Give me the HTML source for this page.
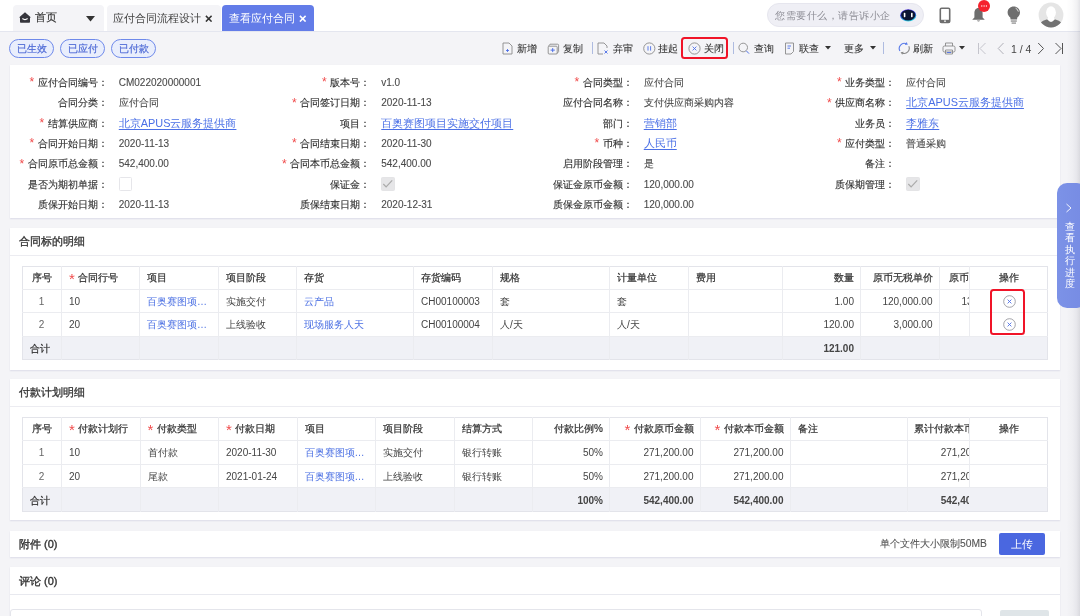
<!DOCTYPE html><html><head><meta charset="utf-8"><style>
*{box-sizing:border-box;margin:0;padding:0}
html,body{width:1080px;height:616px;overflow:hidden}
body{position:relative;background:#f4f4f7;font-family:"Liberation Sans",sans-serif;font-size:10px;color:#333}
.abs{position:absolute}
.t{position:absolute;white-space:nowrap;line-height:20px;height:20px}
.card{position:absolute;left:10px;width:1050px;background:#fff;box-shadow:0 1px 1.5px rgba(60,60,140,0.13), -0.5px 0 1px rgba(60,60,140,0.06)}
.req{color:#f04b4b;font-size:12px;-webkit-text-stroke:0;vertical-align:top;line-height:20px;position:relative;top:-0.5px;left:0px}
.lbl{color:#333;text-align:right;-webkit-text-stroke:0.15px #333}
.val{color:#4a4a4a;-webkit-text-stroke:0.1px #4a4a4a}
.lnk{color:#4a6fe6;text-decoration:underline;text-underline-offset:2px;font-size:10.9px;margin-top:-1px}
.blu{color:#4a6fe3}
.cell{position:absolute;white-space:nowrap;overflow:hidden;line-height:20px;height:20px;font-size:10px;color:#444}
.hd{color:#333;-webkit-text-stroke:0.22px #333}
.bd{font-weight:bold}
.req2{color:#f04b4b;font-size:15px;-webkit-text-stroke:0;vertical-align:top;line-height:20px;position:relative;top:1.5px;letter-spacing:-0.5px}
.sn{color:#666}
#wrap{position:absolute;left:0;top:0;width:1080px;height:616px;will-change:transform}
.r{text-align:right}
.c{text-align:center}
</style></head><body><div id="wrap">
<div class="abs" style="left:0;top:0;width:1080px;height:31px;background:#fff"></div>
<div class="abs" style="left:0;top:31px;width:1080px;height:1px;background:#e4e6ef"></div>
<div class="abs" style="left:13px;top:5px;width:91px;height:26px;background:#f4f4f7;border-radius:4px 4px 0 0"></div>
<div class="abs" style="left:107px;top:5px;width:114px;height:26px;background:#f4f4f7;border-radius:4px 4px 0 0"></div>
<div class="abs" style="left:222px;top:5px;width:92px;height:26px;background:#637ce8;border-radius:4px 4px 0 0"></div>
<svg class="abs" style="left:19px;top:12px" width="12" height="11" viewBox="0 0 12 11"><path d="M6 0.2 L12 5.6 L11 5.6 L11 10 Q11 10.8 10.2 10.8 L1.8 10.8 Q1 10.8 1 10 L1 5.6 L0 5.6Z" fill="#35353c"/><path d="M3.4 6.6 Q6 8.6 8.6 6.6" stroke="#fff" stroke-width="1.3" fill="none"/></svg>
<div class="t" style="left:35px;top:6.6px;font-size:11px;color:#333;-webkit-text-stroke:0.15px #333">首页</div>
<svg class="abs" style="left:86px;top:16px" width="9" height="6" viewBox="0 0 9 6"><path d="M0 0 L9 0 L4.5 5.5Z" fill="#333"/></svg>
<div class="t" style="left:113px;top:8px;font-size:11px;color:#444">应付合同流程设计</div>
<svg class="abs" style="left:204.5px;top:14.5px" width="7.5" height="7.5" viewBox="0 0 7.5 7.5"><path d="M0.9 0.9 L6.6 6.6 M6.6 0.9 L0.9 6.6" stroke="#333" stroke-width="1.5"/></svg>
<div class="t" style="left:229px;top:8px;font-size:11px;color:#fff">查看应付合同</div>
<svg class="abs" style="left:299px;top:14.5px" width="7.5" height="7.5" viewBox="0 0 7.5 7.5"><path d="M0.9 0.9 L6.6 6.6 M6.6 0.9 L0.9 6.6" stroke="#fff" stroke-width="1.5"/></svg>
<div class="abs" style="left:767px;top:3px;width:157px;height:24px;border-radius:12px;background:#efeff5;border:1px solid #e6e6ee"></div>
<div class="t" style="left:775px;top:6px;font-size:10.3px;letter-spacing:0.5px;color:#8c8c94">您需要什么，请告诉小企</div>
<svg class="abs" style="left:899.5px;top:8.5px" width="17" height="14" viewBox="0 0 17 14"><defs><linearGradient id="rb" x1="0" y1="0" x2="0.3" y2="1"><stop offset="0" stop-color="#6b3fe6"/><stop offset="0.5" stop-color="#1f36c8"/><stop offset="1" stop-color="#35d6ec"/></linearGradient></defs><ellipse cx="8.2" cy="6.4" rx="8" ry="6.2" fill="url(#rb)"/><ellipse cx="8.2" cy="6.1" rx="7.1" ry="5.4" fill="#0b1533"/><rect x="3.8" y="3.8" width="1.6" height="4.4" rx="0.6" fill="#fff"/><rect x="11" y="3.8" width="1.6" height="4.4" rx="0.6" fill="#fff"/></svg>
<svg class="abs" style="left:938.8px;top:6.5px" width="12" height="17" viewBox="0 0 12 17"><rect x="1.3" y="1.3" width="9.4" height="14.2" rx="1.3" fill="none" stroke="#6e6e6e" stroke-width="1.6"/><rect x="1.3" y="12.8" width="9.4" height="2.7" fill="#6e6e6e"/><rect x="5.3" y="13.4" width="1.4" height="1.6" fill="#fff"/></svg>
<svg class="abs" style="left:971px;top:6px" width="15" height="17" viewBox="0 0 15 17"><path d="M7.5 2 C4.6 2 3.4 4.6 3.4 7.2 L3.4 11.4 L1.2 13.8 L13.8 13.8 L11.6 11.4 L11.6 7.2 C11.6 4.6 10.4 2 7.5 2Z" fill="#6e6e6e"/><path d="M5.8 14.6 Q7.5 16.4 9.2 14.6Z" fill="#6e6e6e"/></svg>
<div class="abs" style="left:978px;top:-0.5px;width:12.2px;height:12.2px;border-radius:6.1px;background:#f5222d"></div>
<svg class="abs" style="left:978px;top:-0.5px" width="12" height="12"><circle cx="3.8" cy="6" r="0.65" fill="#fff"/><circle cx="6.1" cy="6" r="0.65" fill="#fff"/><circle cx="8.4" cy="6" r="0.65" fill="#fff"/></svg>
<svg class="abs" style="left:1006.8px;top:5.5px" width="14" height="19" viewBox="0 0 14 19"><path d="M6.8 0.6 C3.3 0.6 0.6 3.2 0.6 6.4 C0.6 8.8 2.1 10.2 3.3 11.6 L3.6 13.6 L10 13.6 L10.3 11.6 C11.5 10.2 13 8.8 13 6.4 C13 3.2 10.3 0.6 6.8 0.6Z" fill="#6e6e6e"/><path d="M8.6 2.2 Q10.9 3.2 11.3 5.6" stroke="#fff" stroke-width="0.8" fill="none"/><rect x="3.8" y="14.4" width="6" height="1.3" fill="#8a8a8a"/><rect x="4.6" y="16.4" width="4.4" height="1.4" fill="#9a9a9a"/></svg>
<svg class="abs" style="left:1037.5px;top:2px" width="26" height="26" viewBox="0 0 26 26"><defs><clipPath id="av"><circle cx="13" cy="13" r="12.4"/></clipPath></defs><circle cx="13" cy="13" r="12.4" fill="#e5e5e5"/><g clip-path="url(#av)"><path d="M0.5 26 Q1 19.6 8.5 17.6 L17.5 17.6 Q25 19.6 25.5 26Z" fill="#727272"/><path d="M9.4 17.6 Q13 22.2 16.6 17.6 L15.6 14.5 L10.4 14.5Z" fill="#fff"/><ellipse cx="13" cy="10.6" rx="4.9" ry="6.3" fill="#fff"/></g></svg>
<div class="abs" style="left:9px;top:39px;width:45px;height:19px;border:1px solid #6e89ea;border-radius:10px;background:#e9eefc"></div>
<div class="t c" style="left:9px;top:38.5px;width:45px;font-size:10.2px;color:#4f6bd6;-webkit-text-stroke:0.2px #4f6bd6">已生效</div>
<div class="abs" style="left:60px;top:39px;width:45px;height:19px;border:1px solid #6e89ea;border-radius:10px;background:#e9eefc"></div>
<div class="t c" style="left:60px;top:38.5px;width:45px;font-size:10.2px;color:#4f6bd6;-webkit-text-stroke:0.2px #4f6bd6">已应付</div>
<div class="abs" style="left:111px;top:39px;width:45px;height:19px;border:1px solid #6e89ea;border-radius:10px;background:#e9eefc"></div>
<div class="t c" style="left:111px;top:38.5px;width:45px;font-size:10.2px;color:#4f6bd6;-webkit-text-stroke:0.2px #4f6bd6">已付款</div>
<svg class="abs" style="left:502px;top:42px" width="11" height="13" viewBox="0 0 11 13"><path d="M1 1 L7 1 L10 4 L10 12 L1 12 Z" stroke="#8a8a8a" stroke-width="0.9" fill="none"/><path d="M4 8.5 L7 8.5 M5.5 7 L5.5 10" stroke="#4d6fe6" stroke-width="0.9"/></svg>
<div class="t" style="left:516.5px;top:38.8px;font-size:10px;color:#333;-webkit-text-stroke:0.08px #333">新增</div>
<svg class="abs" style="left:546.5px;top:42.5px" width="13" height="12" viewBox="0 0 13 12"><path d="M1.5 3.2 L3 1.2 L10.6 1.2 Q11.6 1.2 11.6 2.2 L11.6 8.6 L10 10.6" stroke="#8a8a8a" stroke-width="0.9" fill="none"/><rect x="1.2" y="3.2" width="9" height="7.8" rx="1" stroke="#8a8a8a" stroke-width="0.9" fill="none"/><path d="M3.6 7.1 L7.8 7.1 M5.7 5.1 L5.7 9.1" stroke="#4d6fe6" stroke-width="1"/></svg>
<div class="t" style="left:562.5px;top:38.8px;font-size:10px;color:#333;-webkit-text-stroke:0.08px #333">复制</div>
<div class="abs" style="left:592px;top:42px;width:1px;height:12px;background:#aebbe0"></div>
<svg class="abs" style="left:597px;top:42px" width="12" height="13" viewBox="0 0 12 13"><path d="M6 12 L1 12 L1 1 L7 1 L10 4 L10 6" stroke="#8a8a8a" stroke-width="0.9" fill="none"/><path d="M7.5 8.5 L10.5 11.5 M10.5 8.5 L7.5 11.5" stroke="#4d6fe6" stroke-width="0.9"/></svg>
<div class="t" style="left:612.5px;top:38.8px;font-size:10px;color:#333;-webkit-text-stroke:0.08px #333">弃审</div>
<svg class="abs" style="left:642.8px;top:42px" width="13" height="13" viewBox="0 0 13 13"><circle cx="6.3" cy="6.5" r="5.6" stroke="#8a8a8a" stroke-width="0.9" fill="none"/><path d="M5 4.2 L5 8.6 M7.6 4.2 L7.6 8.6" stroke="#4d6fe6" stroke-width="0.9"/></svg>
<div class="t" style="left:658px;top:38.8px;font-size:10px;color:#333;-webkit-text-stroke:0.08px #333">挂起</div>
<div class="abs" style="left:681px;top:37px;width:46.5px;height:21.5px;border:2px solid #f01428;border-radius:3.5px"></div>
<svg class="abs" style="left:687.5px;top:42px" width="13" height="13" viewBox="0 0 13 13"><circle cx="6.5" cy="6.5" r="5.6" stroke="#8a8a8a" stroke-width="0.9" fill="none"/><path d="M4.6 4.6 L8.4 8.4 M8.4 4.6 L4.6 8.4" stroke="#4d6fe6" stroke-width="0.9"/></svg>
<div class="t" style="left:703.5px;top:38.8px;font-size:10px;color:#333;-webkit-text-stroke:0.08px #333">关闭</div>
<div class="abs" style="left:733px;top:42px;width:1px;height:12px;background:#aebbe0"></div>
<svg class="abs" style="left:738px;top:42px" width="12" height="13" viewBox="0 0 12 13"><circle cx="5.2" cy="5.5" r="4.3" stroke="#8a8a8a" stroke-width="0.9" fill="none"/><path d="M8.3 8.8 L11 11.6" stroke="#4d6fe6" stroke-width="1"/></svg>
<div class="t" style="left:753.5px;top:38.8px;font-size:10px;color:#333;-webkit-text-stroke:0.08px #333">查询</div>
<svg class="abs" style="left:784px;top:42px" width="11" height="13" viewBox="0 0 11 13"><path d="M1.5 1 L9.5 1 L9.5 9.5 L7 12 L1.5 12 Z" stroke="#8a8a8a" stroke-width="0.9" fill="none"/><path d="M3.5 4 L7 4 M3.5 6.2 L6 6.2" stroke="#4d6fe6" stroke-width="0.9"/></svg>
<div class="t" style="left:799px;top:38.8px;font-size:10px;color:#333;-webkit-text-stroke:0.08px #333">联查</div>
<svg class="abs" style="left:825px;top:46px" width="6" height="4" viewBox="0 0 6 4"><path d="M0 0 L6 0 L3 3.5Z" fill="#333"/></svg>
<div class="t" style="left:843.5px;top:38.8px;font-size:10px;color:#333;-webkit-text-stroke:0.08px #333">更多</div>
<svg class="abs" style="left:870px;top:46px" width="6" height="4" viewBox="0 0 6 4"><path d="M0 0 L6 0 L3 3.5Z" fill="#333"/></svg>
<div class="abs" style="left:883px;top:42px;width:1px;height:12px;background:#aebbe0"></div>
<svg class="abs" style="left:897.5px;top:42px" width="13" height="13" viewBox="0 0 13 13"><path d="M1.92 8.90 A5 5 0 0 1 8.36 1.87" stroke="#5b7ce9" stroke-width="1.1" fill="none"/><path d="M9.96 2.61 L8.24 0.05 L6.89 2.95Z" fill="#5b7ce9"/><path d="M10.78 4.29 A5 5 0 0 1 4.14 10.93" stroke="#8a8a8a" stroke-width="1.1" fill="none"/><path d="M2.54 10.19 L4.26 12.75 L5.61 9.85Z" fill="#8a8a8a"/></svg>
<div class="t" style="left:913px;top:38.8px;font-size:10px;color:#333;-webkit-text-stroke:0.08px #333">刷新</div>
<svg class="abs" style="left:942px;top:42px" width="14" height="13" viewBox="0 0 14 13"><path d="M3.5 4 L3.5 1 L10.5 1 L10.5 4" stroke="#8a8a8a" stroke-width="0.9" fill="none"/><rect x="1" y="4" width="12" height="6" rx="1.5" stroke="#8a8a8a" stroke-width="0.9" fill="none"/><path d="M3.5 8 L3.5 12 L10.5 12 L10.5 8 Z" stroke="#8a8a8a" stroke-width="0.9" fill="none" /><path d="M5 10.5 L9 10.5" stroke="#4d6fe6" stroke-width="0.9"/></svg>
<svg class="abs" style="left:959px;top:46px" width="6" height="4" viewBox="0 0 6 4"><path d="M0 0 L6 0 L3 3.5Z" fill="#333"/></svg>
<svg class="abs" style="left:977px;top:42px" width="10" height="13" viewBox="0 0 10 13"><path d="M1.5 1 L1.5 12 M8.5 1 L3 6.5 L8.5 12" stroke="#c4c4cc" stroke-width="1" fill="none"/></svg>
<svg class="abs" style="left:997px;top:42px" width="8" height="13" viewBox="0 0 8 13"><path d="M6.5 1 L1.2 6.5 L6.5 12" stroke="#b0b0b8" stroke-width="1" fill="none"/></svg>
<div class="t" style="left:1011px;top:38.5px;font-size:10.5px;color:#444">1 / 4</div>
<svg class="abs" style="left:1037px;top:42px" width="8" height="13" viewBox="0 0 8 13"><path d="M1.2 1 L6.5 6.5 L1.2 12" stroke="#555" stroke-width="1" fill="none"/></svg>
<svg class="abs" style="left:1054px;top:42px" width="10" height="13" viewBox="0 0 10 13"><path d="M1.5 1 L7 6.5 L1.5 12 M8.5 1 L8.5 12" stroke="#555" stroke-width="1" fill="none"/></svg>
<div class="card" style="top:65px;height:153px"></div>
<div class="t lbl" style="left:10.0px;width:97.5px;top:72.80px"><span class="req">* </span>应付合同编号：</div>
<div class="t val" style="left:118.75px;top:72.80px">CM022020000001</div>
<div class="t lbl" style="left:272.5px;width:97.5px;top:72.80px"><span class="req">* </span>版本号：</div>
<div class="t val" style="left:381.25px;top:72.80px">v1.0</div>
<div class="t lbl" style="left:535.0px;width:97.5px;top:72.80px"><span class="req">* </span>合同类型：</div>
<div class="t val" style="left:643.75px;top:72.80px">应付合同</div>
<div class="t lbl" style="left:797.5px;width:97.5px;top:72.80px"><span class="req">* </span>业务类型：</div>
<div class="t val" style="left:906.25px;top:72.80px">应付合同</div>
<div class="t lbl" style="left:10.0px;width:97.5px;top:93.17px">合同分类：</div>
<div class="t val" style="left:118.75px;top:93.17px">应付合同</div>
<div class="t lbl" style="left:272.5px;width:97.5px;top:93.17px"><span class="req">* </span>合同签订日期：</div>
<div class="t val" style="left:381.25px;top:93.17px">2020-11-13</div>
<div class="t lbl" style="left:535.0px;width:97.5px;top:93.17px">应付合同名称：</div>
<div class="t val" style="left:643.75px;top:93.17px">支付供应商采购内容</div>
<div class="t lbl" style="left:797.5px;width:97.5px;top:93.17px"><span class="req">* </span>供应商名称：</div>
<div class="t lnk" style="left:906.25px;top:93.17px">北京APUS云服务提供商</div>
<div class="t lbl" style="left:10.0px;width:97.5px;top:113.54px"><span class="req">* </span>结算供应商：</div>
<div class="t lnk" style="left:118.75px;top:113.54px">北京APUS云服务提供商</div>
<div class="t lbl" style="left:272.5px;width:97.5px;top:113.54px">项目：</div>
<div class="t lnk" style="left:381.25px;top:113.54px">百奥赛图项目实施交付项目</div>
<div class="t lbl" style="left:535.0px;width:97.5px;top:113.54px">部门：</div>
<div class="t lnk" style="left:643.75px;top:113.54px">营销部</div>
<div class="t lbl" style="left:797.5px;width:97.5px;top:113.54px">业务员：</div>
<div class="t lnk" style="left:906.25px;top:113.54px">李雅东</div>
<div class="t lbl" style="left:10.0px;width:97.5px;top:133.91px"><span class="req">* </span>合同开始日期：</div>
<div class="t val" style="left:118.75px;top:133.91px">2020-11-13</div>
<div class="t lbl" style="left:272.5px;width:97.5px;top:133.91px"><span class="req">* </span>合同结束日期：</div>
<div class="t val" style="left:381.25px;top:133.91px">2020-11-30</div>
<div class="t lbl" style="left:535.0px;width:97.5px;top:133.91px"><span class="req">* </span>币种：</div>
<div class="t lnk" style="left:643.75px;top:133.91px">人民币</div>
<div class="t lbl" style="left:797.5px;width:97.5px;top:133.91px"><span class="req">* </span>应付类型：</div>
<div class="t val" style="left:906.25px;top:133.91px">普通采购</div>
<div class="t lbl" style="left:10.0px;width:97.5px;top:154.28px"><span class="req">* </span>合同原币总金额：</div>
<div class="t val" style="left:118.75px;top:154.28px">542,400.00</div>
<div class="t lbl" style="left:272.5px;width:97.5px;top:154.28px"><span class="req">* </span>合同本币总金额：</div>
<div class="t val" style="left:381.25px;top:154.28px">542,400.00</div>
<div class="t lbl" style="left:535.0px;width:97.5px;top:154.28px">启用阶段管理：</div>
<div class="t val" style="left:643.75px;top:154.28px">是</div>
<div class="t lbl" style="left:797.5px;width:97.5px;top:154.28px">备注：</div>
<div class="t val" style="left:906.25px;top:154.28px"></div>
<div class="t lbl" style="left:10.0px;width:97.5px;top:174.65px">是否为期初单据：</div>
<div class="abs" style="left:118.75px;top:177.45px;width:13.5px;height:13.5px;border:1px solid #e6e6ea;border-radius:1.5px;background:#fff"></div>
<div class="t lbl" style="left:272.5px;width:97.5px;top:174.65px">保证金：</div>
<div class="abs" style="left:381.25px;top:177.45px;width:13.5px;height:13.5px;border:1px solid #e4e4e6;border-radius:1.5px;background:#e6e6e8"></div>
<svg class="abs" style="left:381.25px;top:177.45px" width="13" height="13" viewBox="0 0 13 13"><path d="M2.3 7 L5.1 9.9 L11.2 3.4" stroke="#ababab" stroke-width="1.2" fill="none"/></svg>
<div class="t lbl" style="left:535.0px;width:97.5px;top:174.65px">保证金原币金额：</div>
<div class="t val" style="left:643.75px;top:174.65px">120,000.00</div>
<div class="t lbl" style="left:797.5px;width:97.5px;top:174.65px">质保期管理：</div>
<div class="abs" style="left:906.25px;top:177.45px;width:13.5px;height:13.5px;border:1px solid #e4e4e6;border-radius:1.5px;background:#e6e6e8"></div>
<svg class="abs" style="left:906.25px;top:177.45px" width="13" height="13" viewBox="0 0 13 13"><path d="M2.3 7 L5.1 9.9 L11.2 3.4" stroke="#ababab" stroke-width="1.2" fill="none"/></svg>
<div class="t lbl" style="left:10.0px;width:97.5px;top:195.02px">质保开始日期：</div>
<div class="t val" style="left:118.75px;top:195.02px">2020-11-13</div>
<div class="t lbl" style="left:272.5px;width:97.5px;top:195.02px">质保结束日期：</div>
<div class="t val" style="left:381.25px;top:195.02px">2020-12-31</div>
<div class="t lbl" style="left:535.0px;width:97.5px;top:195.02px">质保金原币金额：</div>
<div class="t val" style="left:643.75px;top:195.02px">120,000.00</div>
<div class="card" style="top:228px;height:142px"></div>
<div class="t" style="left:19px;top:231.3px;font-size:11.2px;color:#333;-webkit-text-stroke:0.3px #333">合同标的明细</div>
<div class="abs" style="left:10px;top:255px;width:1050px;height:1px;background:#ececf1"></div>
<div class="abs" style="left:22px;top:335.5px;width:1026px;height:24.5px;background:#f0f1f6"></div>
<div class="abs" style="left:22px;top:265.5px;width:1026px;height:94.5px;border:1px solid #e3e4ea"></div>
<div class="abs" style="left:22px;top:288.5px;width:1026px;height:1px;background:#ebecf0"></div>
<div class="abs" style="left:22px;top:312px;width:1026px;height:1px;background:#ebecf0"></div>
<div class="abs" style="left:22px;top:335.5px;width:1026px;height:1px;background:#ebecf0"></div>
<div class="abs" style="left:61px;top:265.5px;width:1px;height:94.5px;background:#ebecf0"></div>
<div class="abs" style="left:139px;top:265.5px;width:1px;height:94.5px;background:#ebecf0"></div>
<div class="abs" style="left:218px;top:265.5px;width:1px;height:94.5px;background:#ebecf0"></div>
<div class="abs" style="left:296px;top:265.5px;width:1px;height:94.5px;background:#ebecf0"></div>
<div class="abs" style="left:413px;top:265.5px;width:1px;height:94.5px;background:#ebecf0"></div>
<div class="abs" style="left:492px;top:265.5px;width:1px;height:94.5px;background:#ebecf0"></div>
<div class="abs" style="left:609px;top:265.5px;width:1px;height:94.5px;background:#ebecf0"></div>
<div class="abs" style="left:688px;top:265.5px;width:1px;height:94.5px;background:#ebecf0"></div>
<div class="abs" style="left:782px;top:265.5px;width:1px;height:94.5px;background:#ebecf0"></div>
<div class="abs" style="left:860px;top:265.5px;width:1px;height:94.5px;background:#ebecf0"></div>
<div class="abs" style="left:938.5px;top:265.5px;width:1px;height:94.5px;background:#ebecf0"></div>
<div class="abs" style="left:969px;top:265.5px;width:1px;height:70.0px;background:#ebecf0"></div>
<div class="cell hd c" style="left:22px;width:39px;top:267.50px">序号</div>
<div class="cell hd" style="left:69px;width:70px;top:267.50px"><span class="req2">* </span>合同行号</div>
<div class="cell hd" style="left:147px;width:71px;top:267.50px">项目</div>
<div class="cell hd" style="left:226px;width:70px;top:267.50px">项目阶段</div>
<div class="cell hd" style="left:304px;width:109px;top:267.50px">存货</div>
<div class="cell hd" style="left:421px;width:71px;top:267.50px">存货编码</div>
<div class="cell hd" style="left:500px;width:109px;top:267.50px">规格</div>
<div class="cell hd" style="left:617px;width:71px;top:267.50px">计量单位</div>
<div class="cell hd" style="left:696px;width:86px;top:267.50px">费用</div>
<div class="cell hd r" style="left:782px;width:72px;top:267.50px">数量</div>
<div class="cell hd r" style="left:860px;width:72.5px;top:267.50px">原币无税单价</div>
<div class="cell hd" style="left:949.2px;width:19.8px;top:267.50px">原币</div>
<div class="cell hd c" style="left:969px;width:79px;top:267.50px">操作</div>
<div class="cell c sn" style="left:22px;width:39px;top:291.75px">1</div>
<div class="cell " style="left:69px;width:70px;top:291.75px">10</div>
<div class="cell " style="left:147px;width:71px;top:291.75px"><span class="blu">百奥赛图项…</span></div>
<div class="cell " style="left:226px;width:70px;top:291.75px">实施交付</div>
<div class="cell " style="left:304px;width:109px;top:291.75px"><span class="blu">云产品</span></div>
<div class="cell " style="left:421px;width:71px;top:291.75px">CH00100003</div>
<div class="cell " style="left:500px;width:109px;top:291.75px">套</div>
<div class="cell " style="left:617px;width:71px;top:291.75px">套</div>
<div class="cell r" style="left:782px;width:72px;top:291.75px">1.00</div>
<div class="cell r" style="left:860px;width:72.5px;top:291.75px">120,000.00</div>
<div class="cell c sn" style="left:22px;width:39px;top:315.25px">2</div>
<div class="cell " style="left:69px;width:70px;top:315.25px">20</div>
<div class="cell " style="left:147px;width:71px;top:315.25px"><span class="blu">百奥赛图项…</span></div>
<div class="cell " style="left:226px;width:70px;top:315.25px">上线验收</div>
<div class="cell " style="left:304px;width:109px;top:315.25px"><span class="blu">现场服务人天</span></div>
<div class="cell " style="left:421px;width:71px;top:315.25px">CH00100004</div>
<div class="cell " style="left:500px;width:109px;top:315.25px">人/天</div>
<div class="cell " style="left:617px;width:71px;top:315.25px">人/天</div>
<div class="cell r" style="left:782px;width:72px;top:315.25px">120.00</div>
<div class="cell r" style="left:860px;width:72.5px;top:315.25px">3,000.00</div>
<div class="cell " style="left:961.5px;width:7.5px;top:291.75px">13</div>
<div class="cell hd" style="left:30px;width:31px;top:339.25px">合计</div>
<div class="cell bd r" style="left:782px;width:72px;top:339.25px">121.00</div>
<div class="abs" style="left:1009.7px;top:301px"></div>
<svg class="abs" style="left:1003.2px;top:294.5px" width="13" height="13" viewBox="0 0 13 13"><circle cx="6.5" cy="6.5" r="5.8" stroke="#8c8c94" stroke-width="0.8" fill="#fff"/><path d="M4.6 4.6 L8.4 8.4 M8.4 4.6 L4.6 8.4" stroke="#4d6fe6" stroke-width="0.9"/></svg>
<svg class="abs" style="left:1003.2px;top:317.7px" width="13" height="13" viewBox="0 0 13 13"><circle cx="6.5" cy="6.5" r="5.8" stroke="#8c8c94" stroke-width="0.8" fill="#fff"/><path d="M4.6 4.6 L8.4 8.4 M8.4 4.6 L4.6 8.4" stroke="#4d6fe6" stroke-width="0.9"/></svg>
<div class="abs" style="left:990.3px;top:289px;width:35.2px;height:46.4px;border:2px solid #f01428;border-radius:3.5px"></div>
<div class="card" style="top:379px;height:141px"></div>
<div class="t" style="left:19px;top:382.3px;font-size:11.2px;color:#333;-webkit-text-stroke:0.3px #333">付款计划明细</div>
<div class="abs" style="left:10px;top:406px;width:1050px;height:1px;background:#ececf1"></div>
<div class="abs" style="left:22px;top:487px;width:1026px;height:24.5px;background:#f0f1f6"></div>
<div class="abs" style="left:22px;top:416.5px;width:1026px;height:95.0px;border:1px solid #e3e4ea"></div>
<div class="abs" style="left:22px;top:440px;width:1026px;height:1px;background:#ebecf0"></div>
<div class="abs" style="left:22px;top:463.5px;width:1026px;height:1px;background:#ebecf0"></div>
<div class="abs" style="left:22px;top:487px;width:1026px;height:1px;background:#ebecf0"></div>
<div class="abs" style="left:61px;top:416.5px;width:1px;height:95.0px;background:#ebecf0"></div>
<div class="abs" style="left:139.5px;top:416.5px;width:1px;height:95.0px;background:#ebecf0"></div>
<div class="abs" style="left:218px;top:416.5px;width:1px;height:95.0px;background:#ebecf0"></div>
<div class="abs" style="left:296.5px;top:416.5px;width:1px;height:95.0px;background:#ebecf0"></div>
<div class="abs" style="left:374.5px;top:416.5px;width:1px;height:95.0px;background:#ebecf0"></div>
<div class="abs" style="left:453.5px;top:416.5px;width:1px;height:95.0px;background:#ebecf0"></div>
<div class="abs" style="left:531.5px;top:416.5px;width:1px;height:95.0px;background:#ebecf0"></div>
<div class="abs" style="left:609px;top:416.5px;width:1px;height:95.0px;background:#ebecf0"></div>
<div class="abs" style="left:699.5px;top:416.5px;width:1px;height:95.0px;background:#ebecf0"></div>
<div class="abs" style="left:789.5px;top:416.5px;width:1px;height:95.0px;background:#ebecf0"></div>
<div class="abs" style="left:907px;top:416.5px;width:1px;height:95.0px;background:#ebecf0"></div>
<div class="abs" style="left:969px;top:416.5px;width:1px;height:70.5px;background:#ebecf0"></div>
<div class="cell hd c" style="left:22px;width:39px;top:418.75px">序号</div>
<div class="cell hd" style="left:69px;width:70.5px;top:418.75px"><span class="req2">* </span>付款计划行</div>
<div class="cell hd" style="left:147.5px;width:70.5px;top:418.75px"><span class="req2">* </span>付款类型</div>
<div class="cell hd" style="left:226px;width:70.5px;top:418.75px"><span class="req2">* </span>付款日期</div>
<div class="cell hd" style="left:304.5px;width:70px;top:418.75px">项目</div>
<div class="cell hd" style="left:382.5px;width:71px;top:418.75px">项目阶段</div>
<div class="cell hd" style="left:461.5px;width:70px;top:418.75px">结算方式</div>
<div class="cell hd r" style="left:531.5px;width:71.5px;top:418.75px">付款比例%</div>
<div class="cell hd r" style="left:609px;width:84.5px;top:418.75px"><span class="req2">* </span>付款原币金额</div>
<div class="cell hd r" style="left:699.5px;width:84px;top:418.75px"><span class="req2">* </span>付款本币金额</div>
<div class="cell hd" style="left:797.5px;width:109.5px;top:418.75px">备注</div>
<div class="cell hd" style="left:914px;width:55px;top:418.75px">累计付款本币</div>
<div class="cell hd c" style="left:969px;width:79px;top:418.75px">操作</div>
<div class="cell c sn" style="left:22px;width:39px;top:443.25px">1</div>
<div class="cell " style="left:69px;width:70.5px;top:443.25px">10</div>
<div class="cell " style="left:147.5px;width:70.5px;top:443.25px">首付款</div>
<div class="cell " style="left:226px;width:70.5px;top:443.25px">2020-11-30</div>
<div class="cell " style="left:304.5px;width:70px;top:443.25px"><span class="blu">百奥赛图项…</span></div>
<div class="cell " style="left:382.5px;width:71px;top:443.25px">实施交付</div>
<div class="cell " style="left:461.5px;width:70px;top:443.25px">银行转账</div>
<div class="cell r" style="left:531.5px;width:71.5px;top:443.25px">50%</div>
<div class="cell r" style="left:609px;width:84.5px;top:443.25px">271,200.00</div>
<div class="cell r" style="left:699.5px;width:84px;top:443.25px">271,200.00</div>
<div class="cell " style="left:940.7px;width:28.299999999999997px;top:443.25px">271,200.00</div>
<div class="cell c sn" style="left:22px;width:39px;top:466.75px">2</div>
<div class="cell " style="left:69px;width:70.5px;top:466.75px">20</div>
<div class="cell " style="left:147.5px;width:70.5px;top:466.75px">尾款</div>
<div class="cell " style="left:226px;width:70.5px;top:466.75px">2021-01-24</div>
<div class="cell " style="left:304.5px;width:70px;top:466.75px"><span class="blu">百奥赛图项…</span></div>
<div class="cell " style="left:382.5px;width:71px;top:466.75px">上线验收</div>
<div class="cell " style="left:461.5px;width:70px;top:466.75px">银行转账</div>
<div class="cell r" style="left:531.5px;width:71.5px;top:466.75px">50%</div>
<div class="cell r" style="left:609px;width:84.5px;top:466.75px">271,200.00</div>
<div class="cell r" style="left:699.5px;width:84px;top:466.75px">271,200.00</div>
<div class="cell " style="left:940.7px;width:28.299999999999997px;top:466.75px">271,200.00</div>
<div class="cell hd" style="left:30px;width:31px;top:490.75px">合计</div>
<div class="cell bd r" style="left:531.5px;width:71.5px;top:490.75px">100%</div>
<div class="cell bd r" style="left:609px;width:84.5px;top:490.75px">542,400.00</div>
<div class="cell bd r" style="left:699.5px;width:84px;top:490.75px">542,400.00</div>
<div class="cell bd" style="left:940.7px;width:28.299999999999997px;top:490.75px">542,400.00</div>
<div class="card" style="top:530.5px;height:26.5px"></div>
<div class="t" style="left:19px;top:534px;font-size:11px;color:#333;-webkit-text-stroke:0.35px #333">附件 (0)</div>
<div class="t r" style="left:800px;width:187px;top:533.5px;font-size:10.3px;color:#555;-webkit-text-stroke:0.1px #555">单个文件大小限制50MB</div>
<div class="abs" style="left:999px;top:533px;width:46px;height:22px;background:#4a67e0;border-radius:2px"></div>
<div class="t c" style="left:999px;width:46px;top:534px;font-size:10.5px;color:#fff">上传</div>
<div class="card" style="top:567px;height:60px"></div>
<div class="t" style="left:19px;top:571px;font-size:11px;color:#333;-webkit-text-stroke:0.35px #333">评论 (0)</div>
<div class="abs" style="left:10px;top:594px;width:1050px;height:1px;background:#e8e9ef"></div>
<div class="abs" style="left:9.5px;top:609px;width:972.5px;height:20px;border:1px solid #e4e5eb;border-radius:3px"></div>
<div class="abs" style="left:1000px;top:609.5px;width:49px;height:20px;background:#dfe5e8;border-radius:2px"></div>
<div class="abs" style="left:1066px;top:0;width:14px;height:616px;background:linear-gradient(90deg,rgba(20,20,50,0) 0,rgba(20,20,50,0.02) 6px,rgba(20,20,50,0.06) 11px,rgba(20,20,50,0.12) 14px)"></div>
<div class="abs" style="left:1057px;top:183px;width:30px;height:125px;background:linear-gradient(90deg,#7c92e7,#768be3);border-radius:10px"></div>
<svg class="abs" style="left:1065px;top:203px" width="8" height="10" viewBox="0 0 8 10"><path d="M1.5 1 L6 5 L1.5 9" stroke="#fff" stroke-width="0.9" fill="none"/></svg>
<div class="abs" style="left:1063px;top:220.5px;width:14px;font-size:10px;line-height:11.5px;color:#fff;text-align:center;word-break:break-all">查看执行进度</div>
</div></body></html>
